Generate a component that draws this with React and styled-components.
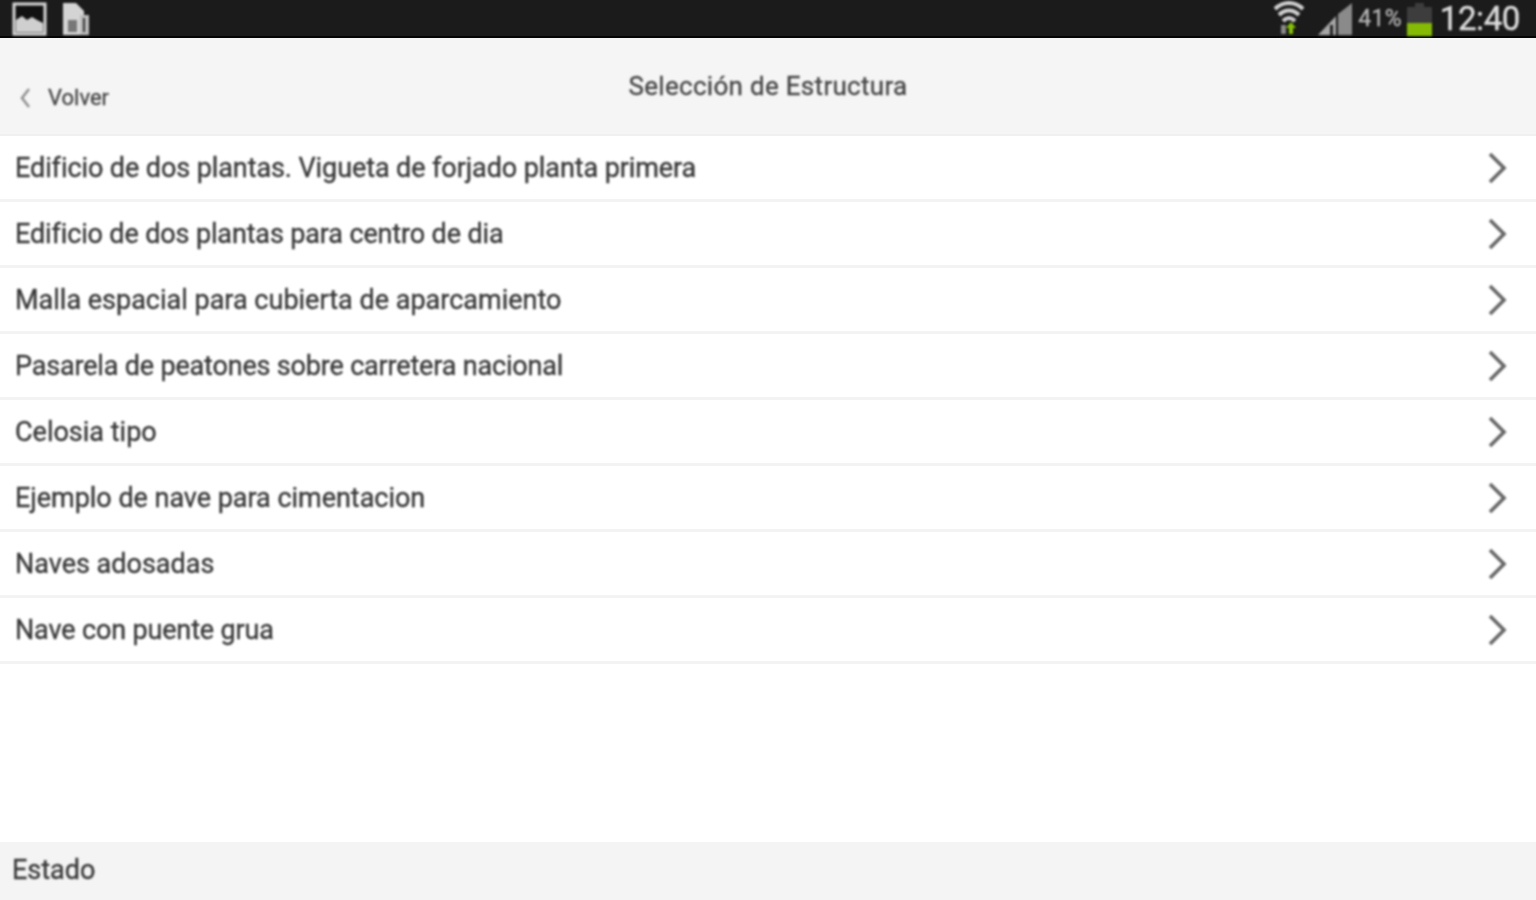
import React from "react";
import styled, { createGlobalStyle } from "styled-components";

const Global = createGlobalStyle`
  html, body { margin: 0; padding: 0; background: #fff; overflow: hidden; }
  body { font-family: Roboto, "Noto Sans", sans-serif; }
`;

const items = [
  { label: "Edificio de dos plantas. Vigueta de forjado planta primera", tracking: -0.09 },
  { label: "Edificio de dos plantas para centro de dia", tracking: -0.14 },
  { label: "Malla espacial para cubierta de aparcamiento", tracking: 0 },
  { label: "Pasarela de peatones sobre carretera nacional", tracking: -0.18 },
  { label: "Celosia tipo", tracking: 0 },
  { label: "Ejemplo de nave para cimentacion", tracking: -0.03 },
  { label: "Naves adosadas", tracking: 0 },
  { label: "Nave con puente grua", tracking: -0.15 },
];

const Page = styled.div`
  width: 1536px;
  height: 900px;
  display: flex;
  flex-direction: column;
  background: #fff;
  overflow: hidden;
`;

const StatusBar = styled.div`
  height: 36px;
  flex: none;
  display: flex;
  justify-content: space-between;
  align-items: flex-end;
  padding: 0 16px 0 12px;
  background: #1b1b1b;
  border-bottom: 2px solid #050505;
`;

const StatusGroup = styled.div`
  display: flex;
  align-items: flex-end;
  gap: ${(p) => p.$gap || 0}px;
  filter: blur(0.9px);
`;

const Clock = styled.span`
  font-size: 33px;
  line-height: 34px;
  letter-spacing: -0.4px;
  color: #dedede;
  margin-left: 8px;
  -webkit-text-stroke: 0.4px #dedede;
`;

const Percent = styled.span`
  font-size: 23px;
  line-height: 30px;
  letter-spacing: 0.3px;
  color: #b8b8b8;
  margin: 0 5px 2px 5px;
  -webkit-text-stroke: 0.3px #b8b8b8;
`;

const SignalSlot = styled.div`
  display: flex;
  margin-left: 11px;
`;

const NavBar = styled.div`
  position: relative;
  height: 96px;
  flex: none;
  background: #f5f5f5;
  border-bottom: 2px solid #f0f0f0;
`;

const BackButton = styled.div`
  position: absolute;
  left: 19px;
  top: 45px;
  display: flex;
  align-items: center;
  gap: 17px;
  font-size: 22px;
  line-height: 30px;
  color: #444;
  -webkit-text-stroke: 0.3px #444;
  filter: blur(0.8px);
`;

const Title = styled.div`
  padding-top: 30px;
  text-align: center;
  font-size: 26px;
  line-height: 36px;
  letter-spacing: 0.3px;
  color: #444;
  -webkit-text-stroke: 0.3px #444;
  filter: blur(0.8px);
`;

const List = styled.div`
  flex: 1;
`;

const Row = styled.div`
  height: 63px;
  display: flex;
  align-items: center;
  justify-content: space-between;
  padding: 0 29px 0 15px;
  border-bottom: 3px solid #f3f3f3;
`;

const RowLabel = styled.span`
  font-size: 27px;
  line-height: 36px;
  letter-spacing: ${(p) => p.$tracking}px;
  color: #383838;
  -webkit-text-stroke: 0.35px #383838;
  filter: blur(0.8px);
`;

const Chevron = styled.svg`
  width: 20px;
  height: 32px;
  flex: none;
  filter: blur(0.9px);
`;

const Footer = styled.div`
  height: 58px;
  flex: none;
  display: flex;
  align-items: center;
  padding: 0 0 2px 12px;
  box-sizing: border-box;
  background: #f4f4f4;
  font-size: 27px;
  color: #383838;
  -webkit-text-stroke: 0.35px #383838;
`;

const FooterText = styled.span`
  filter: blur(0.8px);
`;

const PictureIcon = () => (
  <svg width="35" height="34" viewBox="0 0 35 34">
    <rect x="2" y="2" width="31" height="30" fill="#111" stroke="#d8d8d8" strokeWidth="3" />
    <path d="M4 30V18l6-4 5 4 5-3 5 3 6 3v9z" fill="#cfcfcf" />
  </svg>
);

const FileIcon = () => (
  <svg width="30" height="34" viewBox="0 0 30 34">
    <path d="M2 1h13l8 8v24H2z" fill="#d4d4d4" />
    <rect x="7" y="18" width="9" height="12" fill="#777" />
    <rect x="19" y="13" width="9" height="20" fill="#bbb" />
    <rect x="22" y="16" width="2" height="14" fill="#333" />
  </svg>
);

const WifiIcon = () => (
  <svg width="34" height="36" viewBox="0 0 34 36">
    <path d="M3 9C11 1 23 1 31 9" fill="none" stroke="#d2d2d2" strokeWidth="4" />
    <path d="M7 15C13 9 21 9 27 15" fill="none" stroke="#d2d2d2" strokeWidth="4" />
    <path d="M11 21C15 17 19 17 23 21" fill="none" stroke="#d2d2d2" strokeWidth="4" />
    <rect x="9" y="25" width="5" height="9" fill="#888" />
    <path d="M19 22l5 6h-3v6h-4v-6h-3z" fill="#86c400" />
  </svg>
);

const SignalIcon = () => (
  <svg width="36" height="34" viewBox="0 0 36 34">
    <path d="M35 1V33H21V12z" fill="#8a8a8a" />
    <path d="M19 14V33H1z" fill="#a6a6a6" />
    <rect x="13" y="23" width="3" height="10" fill="#222" />
  </svg>
);

const BatteryIcon = () => (
  <svg width="25" height="34" viewBox="0 0 25 34">
    <path d="M8 1h9v4h8v16H0V5h8z" fill="#3d3d3d" />
    <rect y="21" width="25" height="13" fill="#85bb05" />
  </svg>
);

const App = () => (
  <Page>
    <Global />
    <StatusBar>
      <StatusGroup $gap={14}>
        <PictureIcon />
        <FileIcon />
      </StatusGroup>
      <StatusGroup>
        <WifiIcon />
        <SignalSlot>
          <SignalIcon />
        </SignalSlot>
        <Percent>41%</Percent>
        <BatteryIcon />
        <Clock>12:40</Clock>
      </StatusGroup>
    </StatusBar>
    <NavBar>
      <BackButton>
        <svg width="12" height="22" viewBox="0 0 12 22">
          <path d="M10 2L3 11l7 9" fill="none" stroke="#8f8f8f" strokeWidth="2.5" />
        </svg>
        Volver
      </BackButton>
      <Title>Selección de Estructura</Title>
    </NavBar>
    <List>
      {items.map((item) => (
        <Row key={item.label}>
          <RowLabel $tracking={item.tracking}>{item.label}</RowLabel>
          <Chevron viewBox="0 0 20 32">
            <path d="M3 2l14 14L3 30" fill="none" stroke="#666" strokeWidth="3.6" />
          </Chevron>
        </Row>
      ))}
    </List>
    <Footer>
      <FooterText>Estado</FooterText>
    </Footer>
  </Page>
);

export default App;
